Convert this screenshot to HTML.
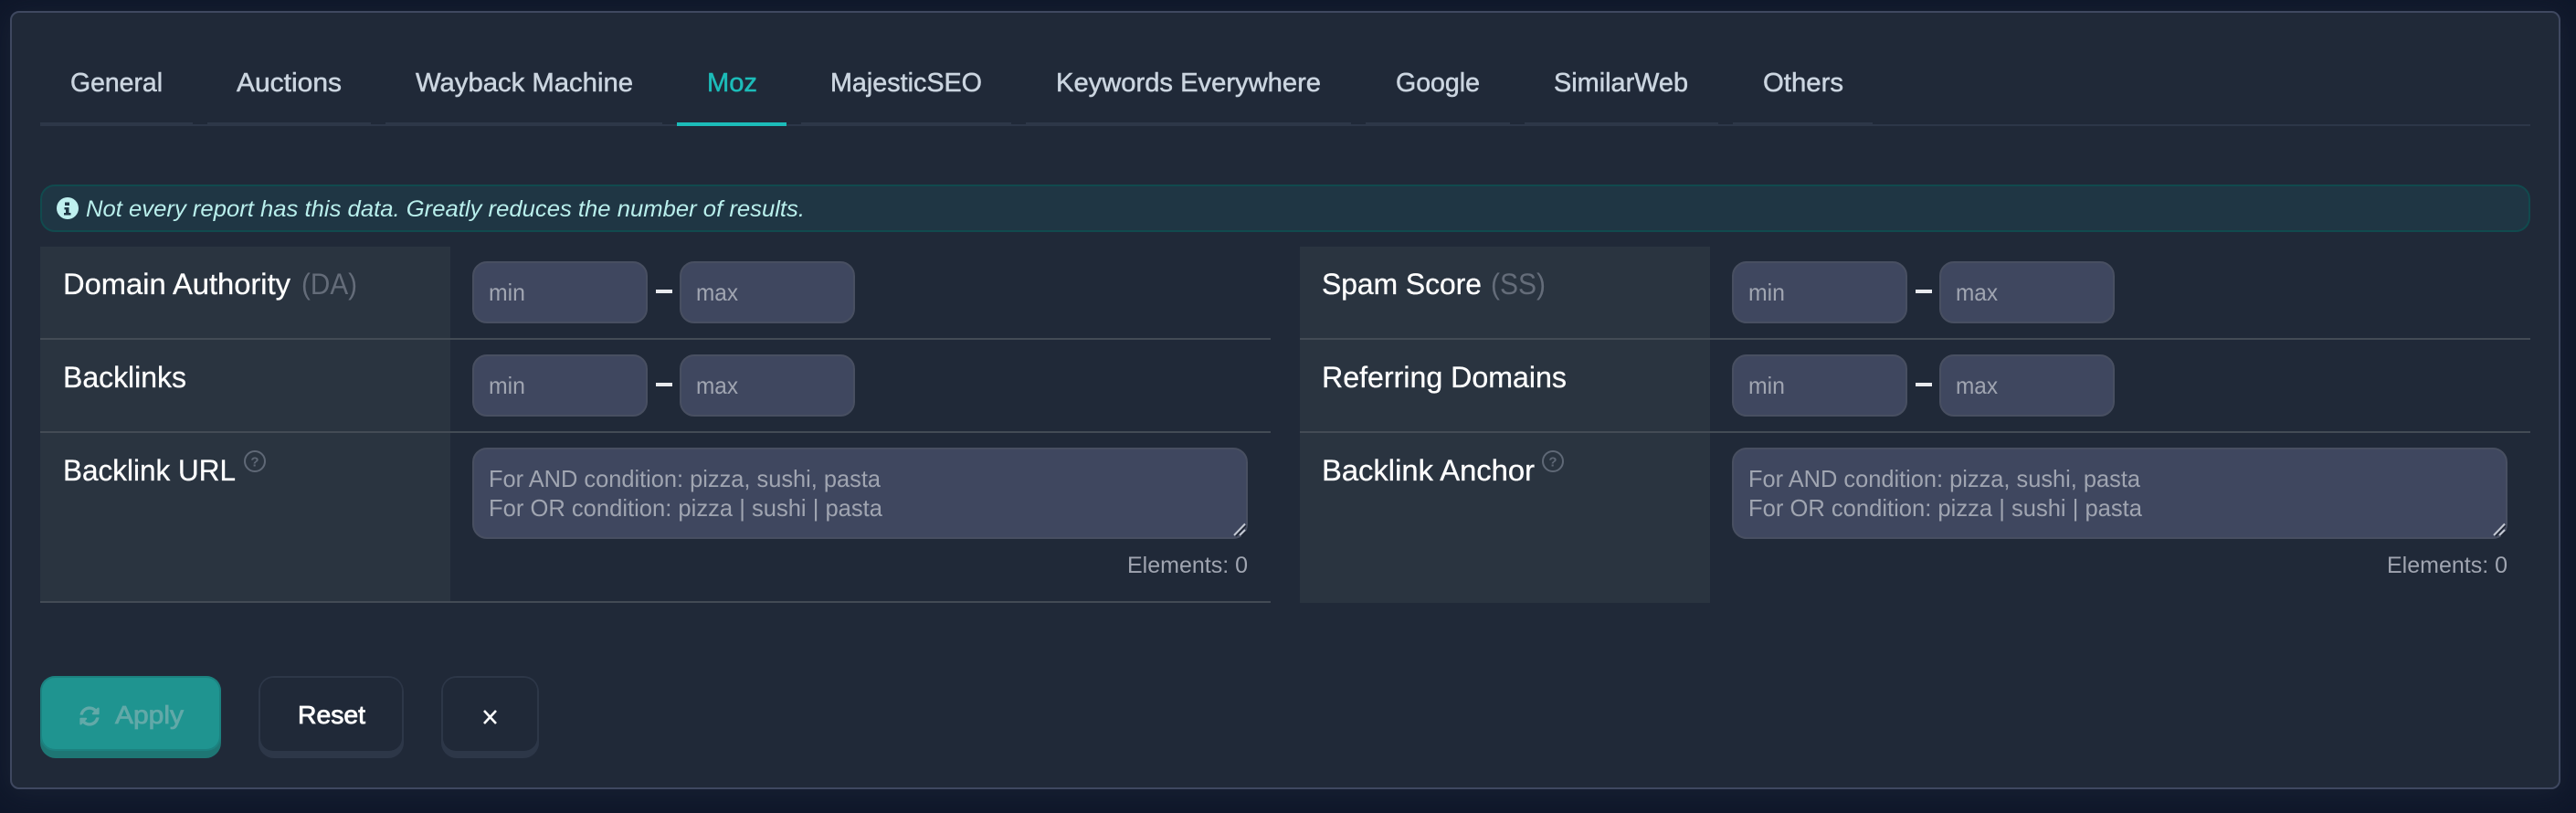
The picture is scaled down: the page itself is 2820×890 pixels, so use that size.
<!DOCTYPE html>
<html lang="en">
<head>
<meta charset="utf-8">
<title>Moz filters</title>
<style>
html,body{margin:0;padding:0;width:2820px;height:890px;overflow:hidden;background:#0f172a}
svg{position:absolute;left:0;top:0;display:block}
#p{position:absolute;left:11px;top:13px;width:2792px;height:850px;border-radius:10px;box-shadow:0 4px 30px 0 rgba(34,43,60,.6)}
text{font-family:"Liberation Sans",sans-serif;white-space:pre}
.tab{font-size:29px;fill:#cbd5e0;stroke:#cbd5e0;stroke-width:.5px}
.lab{font-size:32px;fill:#fff;stroke:#fff;stroke-width:.3px}
.dim{font-size:32px;fill:#646c79}
.ph{font-size:26px;fill:#a0a5b1}
.el{font-size:25px;fill:#a0a5b1}
.inp{fill:#3f475f;stroke:#484f61;stroke-width:2}
.cell{fill:#2a3440}
.ln{fill:#434b55}
.seg{fill:#2d3748}
.q{fill:none;stroke:#5f6876;stroke-width:2}
.qt{font-size:15px;fill:#5f6876;font-weight:bold}
.btn{font-size:28px;stroke-width:.8px}
</style>
</head>
<body>
<div id="p"></div>
<svg width="2820" height="890" viewBox="0 0 2820 890" xmlns="http://www.w3.org/2000/svg">
<rect x="12" y="13" width="2790" height="850" rx="9" fill="#202938" stroke="#3f4860" stroke-width="2"/>

<!-- tabs -->
<rect x="44" y="136" width="2726" height="2" fill="#2d3748"/>
<rect class="seg" x="44" y="134" width="167" height="4"/>
<rect class="seg" x="227" y="134" width="179" height="4"/>
<rect class="seg" x="422" y="134" width="303" height="4"/>
<rect class="seg" x="877" y="134" width="230" height="4"/>
<rect class="seg" x="1123" y="134" width="356" height="4"/>
<rect class="seg" x="1495" y="134" width="158" height="4"/>
<rect class="seg" x="1669" y="134" width="212" height="4"/>
<rect class="seg" x="1897" y="134" width="153" height="4"/>
<rect x="741" y="134" width="120" height="4" fill="#1cbcb9"/>
<text class="tab" x="77" y="100" textLength="101" lengthAdjust="spacingAndGlyphs">General</text>
<text class="tab" x="259" y="100" textLength="115" lengthAdjust="spacingAndGlyphs">Auctions</text>
<text class="tab" x="455" y="100" textLength="238" lengthAdjust="spacingAndGlyphs">Wayback Machine</text>
<text class="tab" x="774" y="100" textLength="55" lengthAdjust="spacingAndGlyphs" style="fill:#1cbcb9;stroke:#1cbcb9">Moz</text>
<text class="tab" x="909" y="100" textLength="166" lengthAdjust="spacingAndGlyphs">MajesticSEO</text>
<text class="tab" x="1156" y="100" textLength="290" lengthAdjust="spacingAndGlyphs">Keywords Everywhere</text>
<text class="tab" x="1528" y="100" textLength="92" lengthAdjust="spacingAndGlyphs">Google</text>
<text class="tab" x="1701" y="100" textLength="147" lengthAdjust="spacingAndGlyphs">SimilarWeb</text>
<text class="tab" x="1930" y="100" textLength="88" lengthAdjust="spacingAndGlyphs">Others</text>

<!-- alert -->
<rect x="45" y="203" width="2724" height="50" rx="15" fill="#1f3644" stroke="#114a4e" stroke-width="2"/>
<circle cx="74" cy="228" r="12" fill="#bff0ef"/>
<path d="M71 221.500h5v3.500h-5zM70.500 227h5v6h2v2.500h-7.500V233h2v-3.500h-1.500z" fill="#1f3644"/>
<text x="94" y="237" font-size="25" font-style="italic" fill="#b9efec" textLength="787" lengthAdjust="spacingAndGlyphs">Not every report has this data. Greatly reduces the number of results.</text>

<!-- label cells -->
<rect class="cell" x="44" y="270" width="449" height="390"/>
<rect class="cell" x="1423" y="270" width="449" height="390"/>

<!-- lines -->
<rect class="ln" x="44" y="370" width="1347" height="2"/>
<rect class="ln" x="44" y="472" width="1347" height="2"/>
<rect class="ln" x="44" y="658" width="1347" height="2"/>
<rect class="ln" x="1423" y="370" width="1347" height="2"/>
<rect class="ln" x="1423" y="472" width="1347" height="2"/>

<!-- labels left -->
<text class="lab" x="69" y="322" textLength="249" lengthAdjust="spacingAndGlyphs">Domain Authority</text>
<text class="dim" x="330" y="322" textLength="61" lengthAdjust="spacingAndGlyphs">(DA)</text>
<text class="lab" x="69" y="424" textLength="135" lengthAdjust="spacingAndGlyphs">Backlinks</text>
<text class="lab" x="69" y="526" textLength="189" lengthAdjust="spacingAndGlyphs">Backlink URL</text>
<circle class="q" cx="279" cy="505" r="11"/>
<text class="qt" x="279" y="510.500" text-anchor="middle">?</text>

<!-- labels right -->
<text class="lab" x="1447" y="322" textLength="175" lengthAdjust="spacingAndGlyphs">Spam Score</text>
<text class="dim" x="1632" y="322" textLength="60" lengthAdjust="spacingAndGlyphs">(SS)</text>
<text class="lab" x="1447" y="424" textLength="268" lengthAdjust="spacingAndGlyphs">Referring Domains</text>
<text class="lab" x="1447" y="526" textLength="233" lengthAdjust="spacingAndGlyphs">Backlink Anchor</text>
<circle class="q" cx="1700" cy="505" r="11"/>
<text class="qt" x="1700" y="510.500" text-anchor="middle">?</text>

<!-- inputs left -->
<rect class="inp" x="518" y="287" width="190" height="66" rx="15"/>
<rect class="inp" x="745" y="287" width="190" height="66" rx="15"/>
<rect x="718" y="317" width="18" height="4" fill="#e8eaee"/>
<text class="ph" x="535" y="329" textLength="40" lengthAdjust="spacingAndGlyphs">min</text>
<text class="ph" x="762" y="329" textLength="46" lengthAdjust="spacingAndGlyphs">max</text>
<rect class="inp" x="518" y="389" width="190" height="66" rx="15"/>
<rect class="inp" x="745" y="389" width="190" height="66" rx="15"/>
<rect x="718" y="419" width="18" height="4" fill="#e8eaee"/>
<text class="ph" x="535" y="431" textLength="40" lengthAdjust="spacingAndGlyphs">min</text>
<text class="ph" x="762" y="431" textLength="46" lengthAdjust="spacingAndGlyphs">max</text>

<!-- inputs right -->
<rect class="inp" x="1897" y="287" width="190" height="66" rx="15"/>
<rect class="inp" x="2124" y="287" width="190" height="66" rx="15"/>
<rect x="2097" y="317" width="18" height="4" fill="#e8eaee"/>
<text class="ph" x="1914" y="329" textLength="40" lengthAdjust="spacingAndGlyphs">min</text>
<text class="ph" x="2141" y="329" textLength="46" lengthAdjust="spacingAndGlyphs">max</text>
<rect class="inp" x="1897" y="389" width="190" height="66" rx="15"/>
<rect class="inp" x="2124" y="389" width="190" height="66" rx="15"/>
<rect x="2097" y="419" width="18" height="4" fill="#e8eaee"/>
<text class="ph" x="1914" y="431" textLength="40" lengthAdjust="spacingAndGlyphs">min</text>
<text class="ph" x="2141" y="431" textLength="46" lengthAdjust="spacingAndGlyphs">max</text>

<!-- textareas -->
<rect class="inp" x="518" y="491" width="847" height="98" rx="15"/>
<text class="ph" x="535" y="533" textLength="429" lengthAdjust="spacingAndGlyphs">For AND condition: pizza, sushi, pasta</text>
<text class="ph" x="535" y="565" textLength="431" lengthAdjust="spacingAndGlyphs">For OR condition: pizza | sushi | pasta</text>
<path d="M1351 586L1363 573.500M1357 586L1363 580" stroke="#c3c8d2" stroke-width="2" fill="none"/>
<path d="M1353 587L1364 575.500M1359 587L1364 582" stroke="#1d2330" stroke-width="1.500" fill="none"/>
<text class="el" x="1234" y="627" textLength="132" lengthAdjust="spacingAndGlyphs">Elements: 0</text>

<rect class="inp" x="1897" y="491" width="847" height="98" rx="15"/>
<text class="ph" x="1914" y="533" textLength="429" lengthAdjust="spacingAndGlyphs">For AND condition: pizza, sushi, pasta</text>
<text class="ph" x="1914" y="565" textLength="431" lengthAdjust="spacingAndGlyphs">For OR condition: pizza | sushi | pasta</text>
<path d="M2730 586L2742 573.500M2736 586L2742 580" stroke="#c3c8d2" stroke-width="2" fill="none"/>
<path d="M2732 587L2743 575.500M2738 587L2743 582" stroke="#1d2330" stroke-width="1.500" fill="none"/>
<text class="el" x="2613" y="627" textLength="132" lengthAdjust="spacingAndGlyphs">Elements: 0</text>

<!-- buttons -->
<rect x="44" y="740" width="198" height="90" rx="17" fill="#1e7674"/>
<rect x="44" y="740" width="198" height="82" rx="16" fill="#1c8280"/>
<rect x="46" y="742" width="194" height="78" rx="14" fill="#1f9490"/>
<svg x="87" y="773" width="22" height="22" viewBox="0 0 512 512"><path fill="#62a9a8" d="M370.720 133.280C339.458 104.008 298.888 87.962 255.848 88c-77.458.068-144.328 53.178-162.791 126.850-1.344 5.363-6.122 9.150-11.651 9.150H24.103c-7.498 0-13.194-6.807-11.807-14.176C33.933 94.924 134.813 8 256 8c66.448 0 126.791 26.136 171.315 68.685L463.030 40.970C478.149 25.851 504 36.559 504 57.941V192c0 13.255-10.745 24-24 24H345.941c-21.382 0-32.090-25.851-16.971-40.971l41.750-41.749zM32 296h134.059c21.382 0 32.090 25.851 16.971 40.971l-41.750 41.750c31.262 29.273 71.835 45.319 114.876 45.280 77.418-.07 144.315-53.144 162.787-126.849 1.344-5.363 6.122-9.150 11.651-9.150h57.304c7.498 0 13.194 6.807 11.807 14.176C478.067 417.076 377.187 504 256 504c-66.448 0-126.791-26.136-171.315-68.685L48.970 471.030C33.851 486.149 8 475.441 8 454.059V320c0-13.255 10.745-24 24-24z"/></svg>
<text class="btn" x="126" y="792" fill="#62a9a8" stroke="#62a9a8" textLength="75" lengthAdjust="spacingAndGlyphs">Apply</text>

<rect x="283" y="740" width="159" height="90" rx="17" fill="#2d3748"/>
<rect x="285" y="742" width="155" height="80" rx="14" fill="#202938"/>
<text class="btn" x="326" y="792" fill="#fff" stroke="#fff" textLength="74" lengthAdjust="spacingAndGlyphs">Reset</text>

<rect x="483" y="740" width="107" height="90" rx="17" fill="#2d3748"/>
<rect x="485" y="742" width="103" height="80" rx="14" fill="#202938"/>
<path d="M530 778L543 792M543 778L530 792" stroke="#fff" stroke-width="2.600" fill="none"/>
</svg>
</body>
</html>
